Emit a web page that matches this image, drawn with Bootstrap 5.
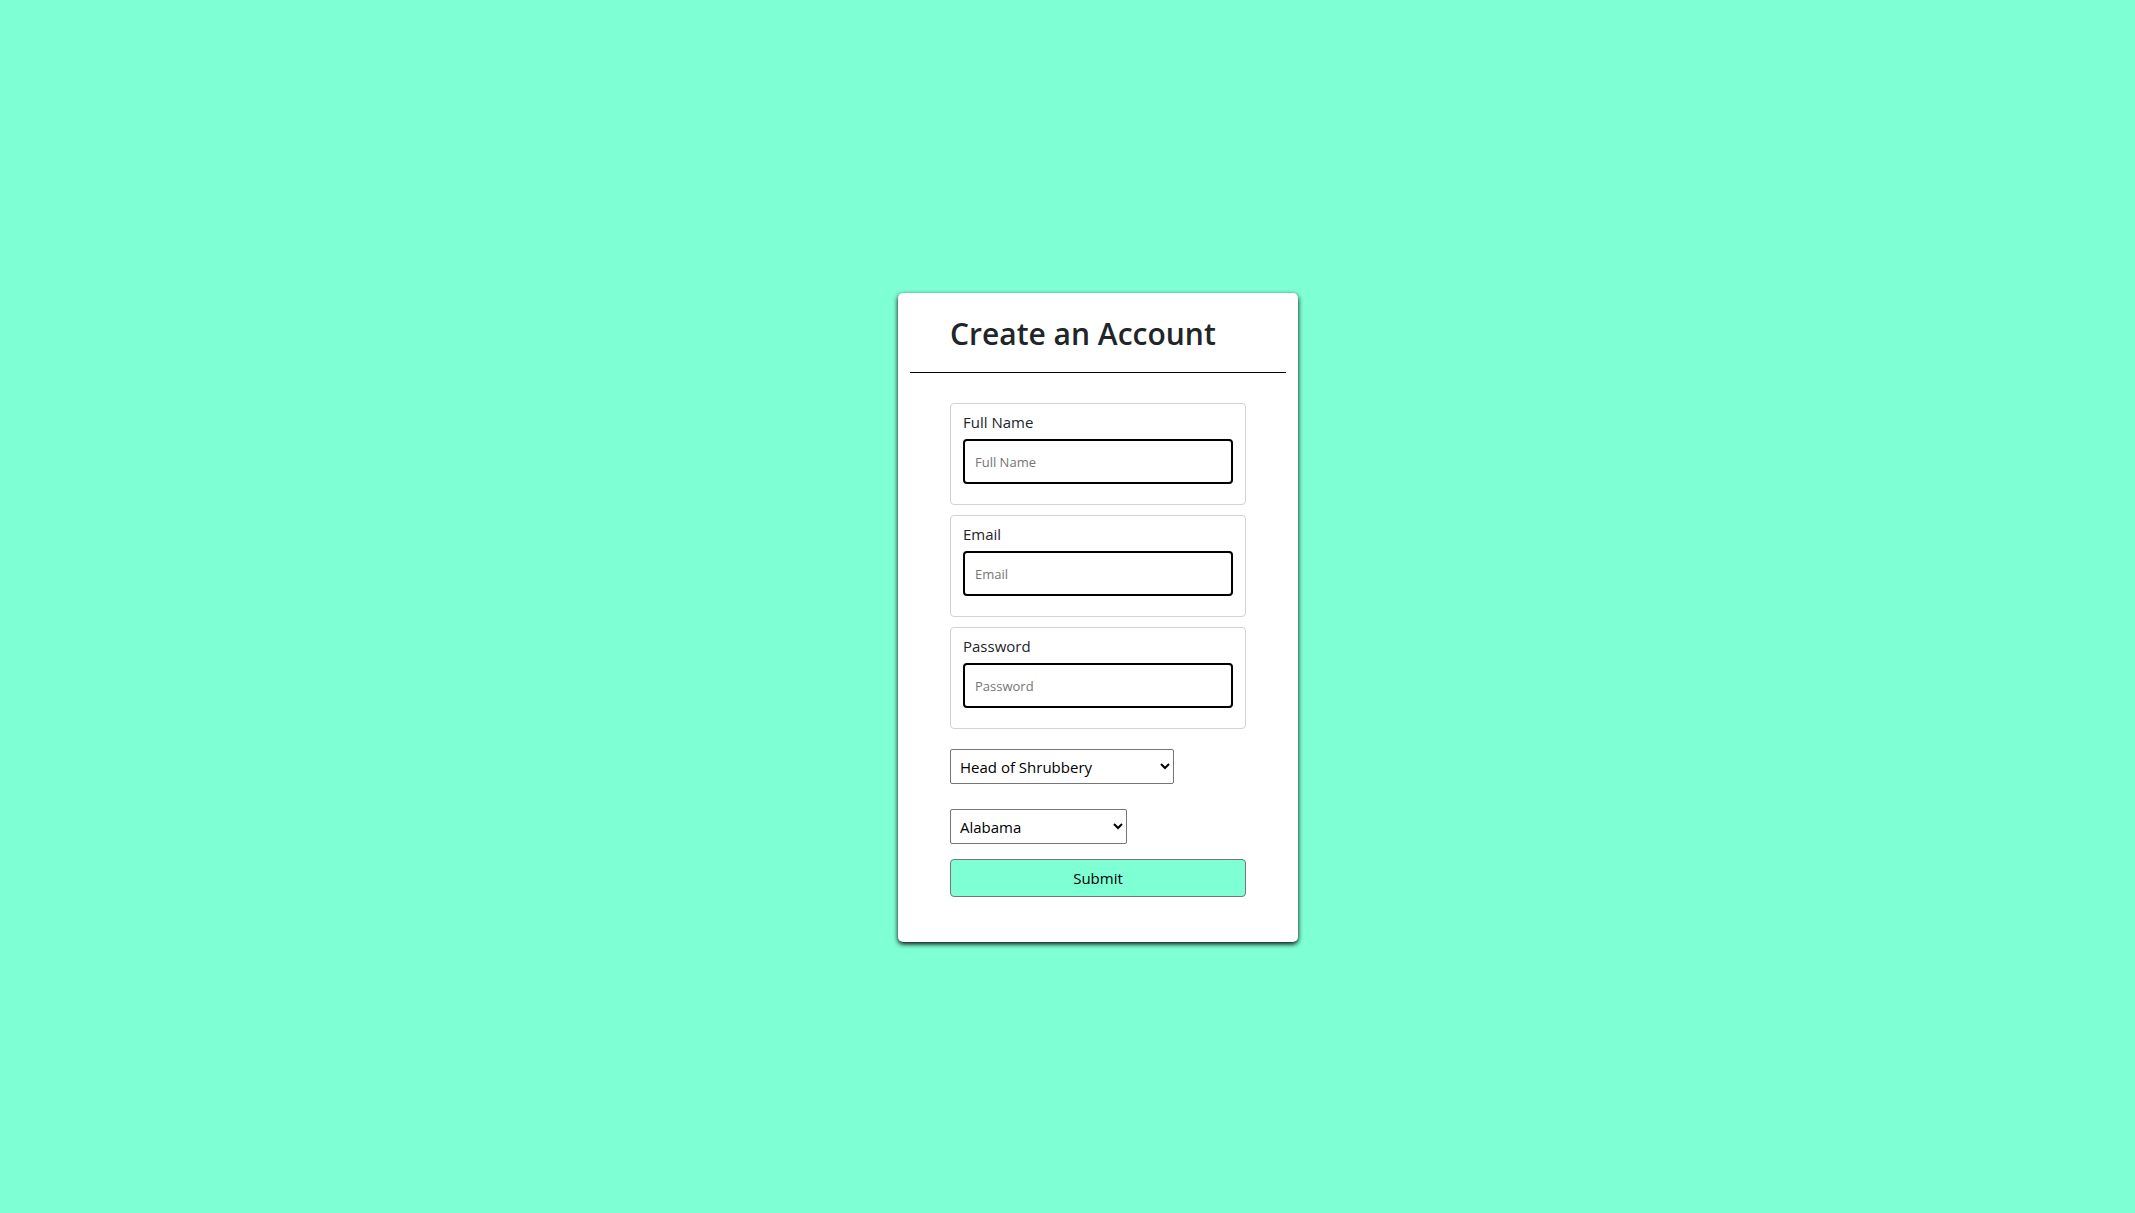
<!DOCTYPE html>
<html lang="en">
<head>
<meta charset="utf-8">
<meta name="viewport" content="width=device-width, initial-scale=1">
<title>Create an Account</title>
<link href="https://cdn.jsdelivr.net/npm/bootstrap@5.3.0/dist/css/bootstrap.min.css" rel="stylesheet">
<style>
body { background: aquamarine; font-family: "Segoe UI", "Open Sans", "Noto Sans", sans-serif; font-size: 15px; line-height: 24px; }
.signup-page { padding: 22px 0 0 61px; }
.signup-card { width: 400px; max-width: 100%; padding: 0 12px 45px; border-radius: 5px; box-shadow: 0 2px 5px #000; }
.signup-title { padding: 22px 40px 20px; margin-bottom: 30px; border-bottom: 1px solid #000; font-size: 30px; line-height: 37px; font-weight: 600; }
.signup-form { padding: 0 40px; }
.field-box { padding: 6px 12px 20px; margin-bottom: 10px; border: 1px solid #ced4da; border-radius: 4px; }
.field-box label { margin-bottom: 5px; }
.field-input { height: 45px; padding: 0 10px; border: 2px solid #000; border-radius: 4px; font-size: 13px; }
.field-input::placeholder { color: #757575; }
.pick { height: 35px; padding: 0 5px; border: 1px solid #767676; border-radius: 2px; background: #fff; color: #000; }
.pick-role { width: 224px; margin: 10px 0 25px; }
.pick-state { width: 177px; margin-bottom: 15px; }
.submit-btn { height: 38px; padding: 0; border: 1px solid #767676; border-radius: 4px; background: aquamarine; color: #000; }
</style>
</head>
<body>
<main class="signup-page min-vh-100 d-flex align-items-center justify-content-center">
  <section class="signup-card bg-white">
    <h1 class="signup-title">Create an Account</h1>
    <form class="signup-form d-flex flex-column align-items-start">
      <div class="field-box w-100">
        <label class="d-block" for="fullName">Full Name</label>
        <input class="field-input d-block w-100" id="fullName" type="text" placeholder="Full Name">
      </div>
      <div class="field-box w-100">
        <label class="d-block" for="email">Email</label>
        <input class="field-input d-block w-100" id="email" type="email" placeholder="Email">
      </div>
      <div class="field-box w-100">
        <label class="d-block" for="password">Password</label>
        <input class="field-input d-block w-100" id="password" type="password" placeholder="Password">
      </div>
      <select class="pick pick-role" aria-label="Job role">
        <option>Head of Shrubbery</option>
      </select>
      <select class="pick pick-state" aria-label="State">
        <option>Alabama</option>
      </select>
      <button class="submit-btn w-100" type="submit">Submit</button>
    </form>
  </section>
</main>
<script src="https://cdn.jsdelivr.net/npm/bootstrap@5.3.0/dist/js/bootstrap.bundle.min.js"></script>
</body>
</html>
